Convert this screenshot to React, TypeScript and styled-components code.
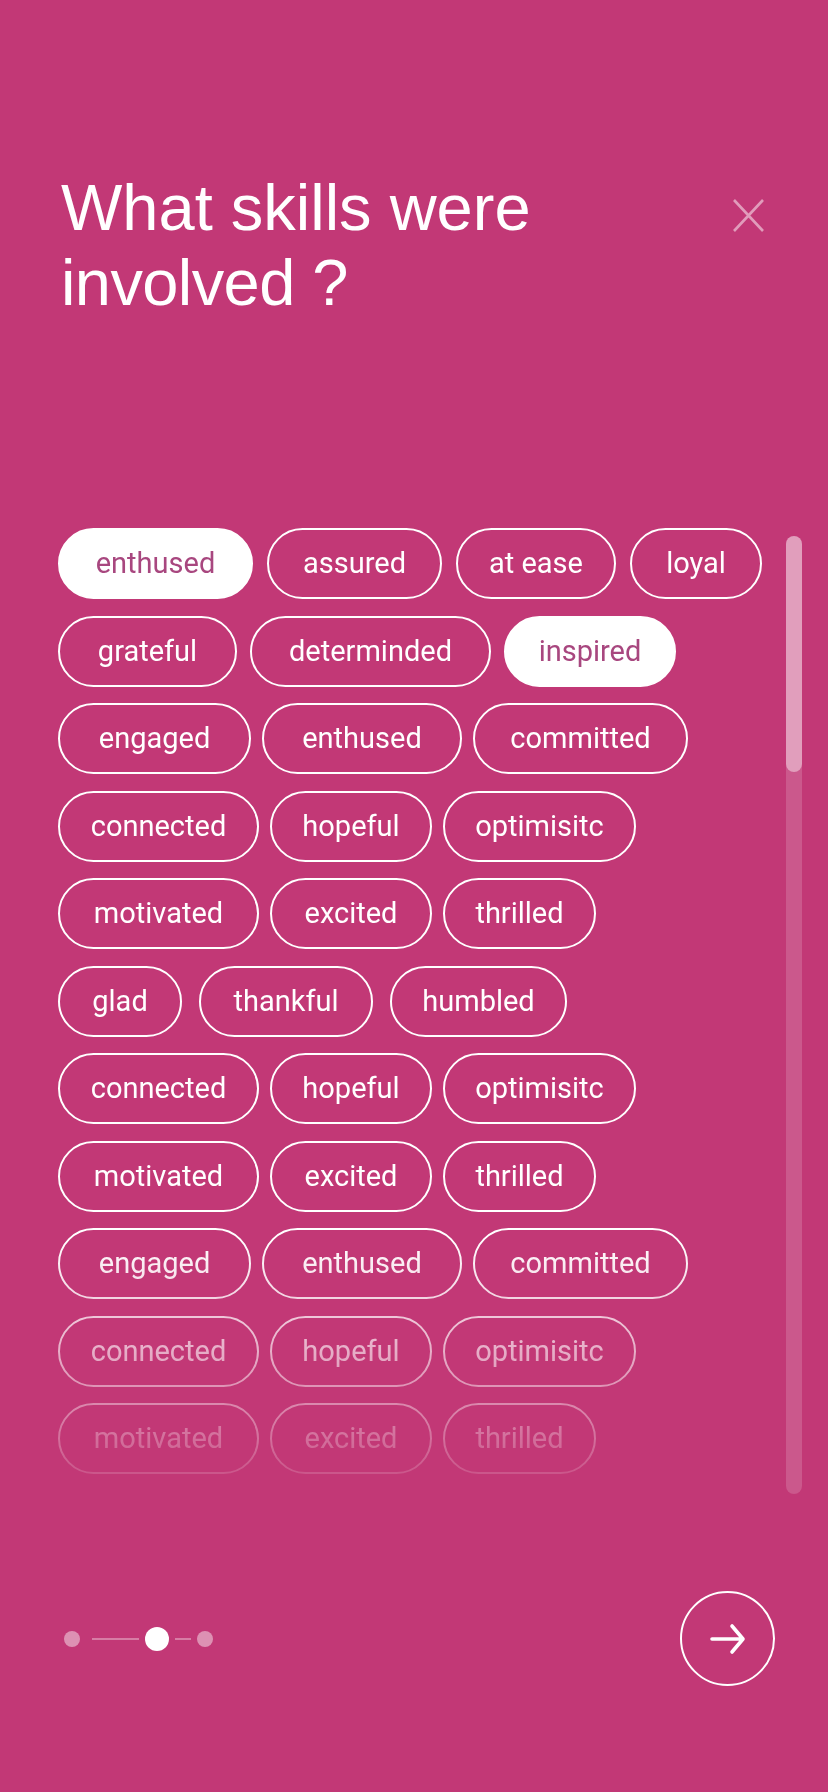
import React from 'react';
import styled, { createGlobalStyle } from 'styled-components';

const GlobalStyle = createGlobalStyle`
  html, body {
    margin: 0;
    padding: 0;
    background: #c23876;
  }
  * {
    box-sizing: border-box;
  }
`;

const Page = styled.div`
  width: 828px;
  min-height: 1792px;
  background: #c23876;
  display: flex;
  flex-direction: column;
  font-family: Roboto, 'Noto Sans', sans-serif;
`;

const Header = styled.div`
  display: flex;
  justify-content: space-between;
  align-items: flex-start;
  padding: 170px 63px 0 61px;
`;

const Title = styled.h1`
  margin: 0;
  font-family: 'Liberation Sans', Arial, sans-serif;
  font-weight: 400;
  font-size: 65px;
  line-height: 75px;
  color: #ffffff;
`;

const Tight = styled.span`
  letter-spacing: -0.6px;
`;

const CloseButton = styled.button`
  width: 33px;
  height: 33px;
  margin-top: 29px;
  padding: 0;
  border: none;
  background: none;
  display: flex;
  align-items: center;
  justify-content: center;
  cursor: pointer;
`;

const Body = styled.div`
  display: flex;
  padding: 0 26px 0 58px;
  margin-top: 208px;
  gap: 16px;
`;

const ChipList = styled.div`
  flex: 1;
  height: 966px;
  overflow: hidden;
  display: flex;
  flex-direction: column;
  gap: 16.5px;
  -webkit-mask-image: linear-gradient(to bottom, #000 0, #000 712px, rgba(0, 0, 0, 0.08) 100%);
  mask-image: linear-gradient(to bottom, #000 0, #000 712px, rgba(0, 0, 0, 0.08) 100%);
`;

const ChipRow = styled.div<{ $gap: number }>`
  display: flex;
  gap: ${(p) => p.$gap}px;
`;

const Chip = styled.button<{ $w: number; $selected?: boolean }>`
  flex: none;
  width: ${(p) => p.$w}px;
  height: 71px;
  padding: 0;
  border-radius: 36px;
  border: 2px solid #ffffff;
  background: ${(p) => (p.$selected ? '#ffffff' : 'transparent')};
  color: ${(p) => (p.$selected ? '#a8477f' : '#ffffff')};
  font-family: Roboto, 'Noto Sans', sans-serif;
  font-size: 29px;
  font-weight: 400;
  line-height: 1;
  display: flex;
  align-items: center;
  justify-content: center;
  cursor: pointer;
`;

const ScrollTrack = styled.div`
  width: 16px;
  height: 958px;
  margin-top: 8px;
  border-radius: 8px;
  background: rgba(255, 255, 255, 0.16);
  display: flex;
  flex-direction: column;
`;

const ScrollThumb = styled.div`
  height: 236px;
  border-radius: 8px;
  background: rgba(255, 255, 255, 0.42);
`;

const Footer = styled.div`
  display: flex;
  align-items: center;
  justify-content: space-between;
  padding: 97px 53px 0 64px;
`;

const Steps = styled.div`
  display: flex;
  align-items: center;
  gap: 6px;
`;

const Dot = styled.span<{ $active?: boolean }>`
  width: ${(p) => (p.$active ? 24 : 16)}px;
  height: ${(p) => (p.$active ? 24 : 16)}px;
  border-radius: 50%;
  background: ${(p) => (p.$active ? '#ffffff' : 'rgba(255, 255, 255, 0.45)')};
`;

const StepLine = styled.span<{ $w: number; $lead?: number }>`
  width: ${(p) => p.$w}px;
  height: 2px;
  margin-left: ${(p) => p.$lead || 0}px;
  background: rgba(255, 255, 255, 0.35);
`;

const NextButton = styled.button`
  width: 95px;
  height: 95px;
  border-radius: 50%;
  border: 2px solid #ffffff;
  background: transparent;
  padding: 0;
  display: flex;
  align-items: center;
  justify-content: center;
  cursor: pointer;
`;

type Skill = { label: string; w: number; selected?: boolean };
type Row = { gap: number; items: Skill[] };

const connectedRow: Row = {
  gap: 11,
  items: [
    { label: 'connected', w: 201 },
    { label: 'hopeful', w: 162 },
    { label: 'optimisitc', w: 193 },
  ],
};

const motivatedRow: Row = {
  gap: 11,
  items: [
    { label: 'motivated', w: 201 },
    { label: 'excited', w: 162 },
    { label: 'thrilled', w: 153 },
  ],
};

const engagedRow: Row = {
  gap: 11,
  items: [
    { label: 'engaged', w: 193 },
    { label: 'enthused', w: 200 },
    { label: 'committed', w: 215 },
  ],
};

const rows: Row[] = [
  {
    gap: 14,
    items: [
      { label: 'enthused', w: 195, selected: true },
      { label: 'assured', w: 175 },
      { label: 'at ease', w: 160 },
      { label: 'loyal', w: 132 },
    ],
  },
  {
    gap: 13,
    items: [
      { label: 'grateful', w: 179 },
      { label: 'determinded', w: 241 },
      { label: 'inspired', w: 172, selected: true },
    ],
  },
  engagedRow,
  connectedRow,
  motivatedRow,
  {
    gap: 17,
    items: [
      { label: 'glad', w: 124 },
      { label: 'thankful', w: 174 },
      { label: 'humbled', w: 177 },
    ],
  },
  connectedRow,
  motivatedRow,
  engagedRow,
  connectedRow,
  motivatedRow,
];

const App: React.FC = () => {
  return (
    <Page>
      <GlobalStyle />
      <Header>
        <Title>
          What skills were
          <br />
          <Tight>involved ?</Tight>
        </Title>
        <CloseButton aria-label="Close">
          <svg width="33" height="33" viewBox="0 0 33 33">
            <path
              d="M2 1 L31 32 M31 1 L2 32"
              stroke="rgba(255,255,255,0.5)"
              strokeWidth="2.6"
              fill="none"
            />
          </svg>
        </CloseButton>
      </Header>

      <Body>
        <ChipList>
          {rows.map((row, r) => (
            <ChipRow key={r} $gap={row.gap}>
              {row.items.map((s, i) => (
                <Chip key={i} $w={s.w} $selected={s.selected}>
                  {s.label}
                </Chip>
              ))}
            </ChipRow>
          ))}
        </ChipList>
        <ScrollTrack>
          <ScrollThumb />
        </ScrollTrack>
      </Body>

      <Footer>
        <Steps>
          <Dot />
          <StepLine $w={47} $lead={6} />
          <Dot $active />
          <StepLine $w={16} />
          <Dot />
        </Steps>
        <NextButton aria-label="Next">
          <svg width="38" height="32" viewBox="0 0 38 32">
            <path
              d="M3 16 H34 M23 3 L34 16 L23 29"
              stroke="#ffffff"
              strokeWidth="3.6"
              strokeLinecap="round"
              strokeLinejoin="round"
              fill="none"
            />
          </svg>
        </NextButton>
      </Footer>
    </Page>
  );
};

export default App;
